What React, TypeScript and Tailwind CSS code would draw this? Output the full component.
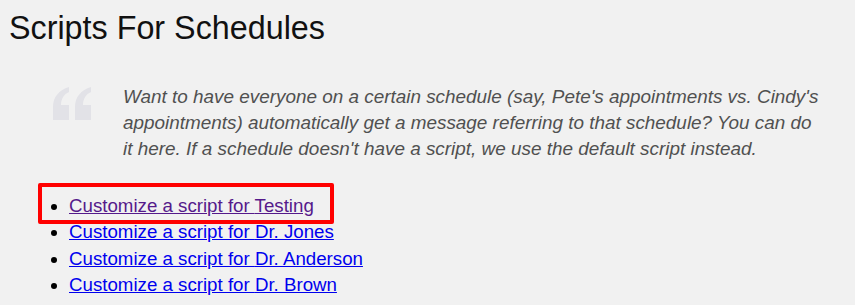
import React from "react";

const schedules = ["Testing", "Dr. Jones", "Dr. Anderson", "Dr. Brown"];

function QuoteMark() {
  return (
    <svg width="40" height="34" viewBox="0 0 40 34" className="shrink-0">
      <path
        d="M16 0 C6 3 0 10 0 20 L0 33 L16 33 L16 18 L8 18 C8 12 11 7 16 5 Z"
        fill="#e2e2e7"
      />
      <path
        d="M38 0 C28 3 22 10 22 20 L22 33 L38 33 L38 18 L30 18 C30 12 33 7 38 5 Z"
        fill="#e2e2e7"
      />
    </svg>
  );
}

export default function App() {
  return (
    <div
      className="w-[855px] h-[305px] bg-[#f1f1f1] overflow-hidden pl-[9px] pt-[10px]"
      style={{ fontFamily: '"Liberation Sans", Arial, sans-serif' }}
    >
      <h1 className="text-[32.3px] leading-[36px] text-[#111]">Scripts For Schedules</h1>

      <div className="flex gap-[30px] pl-[44px] mt-[41px]">
        <QuoteMark />
        <p className="italic text-[18.9px] leading-[26px] text-[#505050] w-[698px] -mt-[3px]">
          Want to have everyone on a certain schedule (say, Pete's appointments vs. Cindy's
          appointments) automatically get a message referring to that schedule? You can do it
          here. If a schedule doesn't have a script, we use the default script instead.
        </p>
      </div>

      <ul className="relative mt-[31px] pl-[60px] list-disc text-[18.7px] leading-[26.3px] text-black">
        {schedules.map((name, i) => (
          <li key={name}>
            <a
              href="#"
              className={i === 0 ? "underline text-[#551a8b]" : "underline text-[#0000ee]"}
            >
              Customize a script for {name}
            </a>
          </li>
        ))}
        <div className="absolute left-[29px] top-[-10px] w-[296px] h-[41px] border-[4px] border-[#ff0000] rounded-[2px] pointer-events-none" />
      </ul>
    </div>
  );
}
